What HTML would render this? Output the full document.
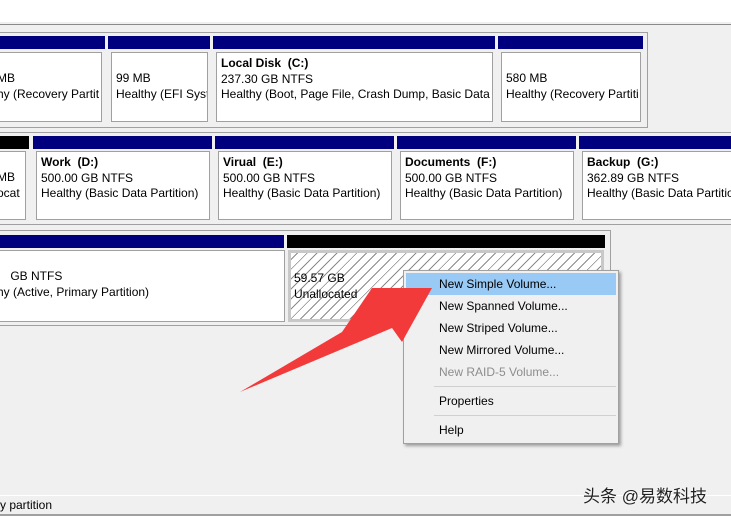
<!DOCTYPE html>
<html><head><meta charset="utf-8"><style>
*{margin:0;padding:0;box-sizing:border-box}
body{width:731px;height:516px;overflow:hidden;background:#f0f0f0;position:relative;font-family:"Liberation Sans",sans-serif;font-size:12px;color:#000}
.a{position:absolute}
.out{position:absolute;border:1px solid #a0a0a0;border-left:none;background:#f0f0f0}
.bar{position:absolute;height:13px;background:#00007f}
.box{position:absolute;background:#fff;border:1px solid #a0a0a0;overflow:hidden;white-space:nowrap;line-height:15.5px;padding:3px 0 0 6px}
.box b{font-weight:bold}
.hat{background:repeating-linear-gradient(135deg,#fff 0 4px,#8a8a8a 4px 5px,#fff 5px 7px)}
.mi{position:absolute;left:35px;font-size:12px}
</style></head><body>
<div class="a" style="left:0;top:0;width:731px;height:22px;background:#fff"></div>
<div class="a" style="left:0;top:24px;width:731px;height:1px;background:#8a8a8a"></div>

<div class="out" style="left:0;top:32px;width:648px;height:96px"></div>
<div class="bar" style="left:0;top:36px;width:105px"></div>
<div class="bar" style="left:108px;top:36px;width:102px"></div>
<div class="bar" style="left:213px;top:36px;width:282px"></div>
<div class="bar" style="left:498px;top:36px;width:145px"></div>
<div class="box" style="left:-10px;top:52px;width:112px;height:70px;padding-top:18px">MB<br>hy (Recovery Partit</div>
<div class="box" style="left:111px;top:52px;width:97px;height:70px;padding-top:18px;padding-left:4px">99 MB<br>Healthy (EFI Syste</div>
<div class="box" style="left:216px;top:52px;width:277px;height:70px;padding-left:4px"><b>Local Disk&nbsp; (C:)</b><br>237.30 GB NTFS<br>Healthy (Boot, Page File, Crash Dump, Basic Data P</div>
<div class="box" style="left:501px;top:52px;width:140px;height:70px;padding-top:18px;padding-left:4px">580 MB<br>Healthy (Recovery Partiti</div>

<div class="out" style="left:0;top:132px;width:732px;height:93px"></div>
<div class="bar" style="left:0;top:136px;width:29px;background:#000"></div>
<div class="bar" style="left:33px;top:136px;width:179px"></div>
<div class="bar" style="left:215px;top:136px;width:179px"></div>
<div class="bar" style="left:397px;top:136px;width:179px"></div>
<div class="bar" style="left:579px;top:136px;width:152px"></div>
<div class="box" style="left:-10px;top:151px;width:36px;height:69px;padding-top:18px">MB<br>ocat</div>
<div class="box" style="left:36px;top:151px;width:174px;height:69px;padding-left:4px"><b>Work&nbsp; (D:)</b><br>500.00 GB NTFS<br>Healthy (Basic Data Partition)</div>
<div class="box" style="left:218px;top:151px;width:174px;height:69px;padding-left:4px"><b>Virual&nbsp; (E:)</b><br>500.00 GB NTFS<br>Healthy (Basic Data Partition)</div>
<div class="box" style="left:400px;top:151px;width:174px;height:69px;padding-left:4px"><b>Documents&nbsp; (F:)</b><br>500.00 GB NTFS<br>Healthy (Basic Data Partition)</div>
<div class="box" style="left:582px;top:151px;width:160px;height:69px;padding-left:4px"><b>Backup&nbsp; (G:)</b><br>362.89 GB NTFS<br>Healthy (Basic Data Partition</div>

<div class="out" style="left:0;top:230px;width:611px;height:96px"></div>
<div class="bar" style="left:0;top:235px;width:284px"></div>
<div class="bar" style="left:287px;top:235px;width:318px;background:#000"></div>
<div class="box" style="left:-10px;top:250px;width:295px;height:72px;padding-top:18px">&nbsp;&nbsp;&nbsp;&nbsp;GB NTFS<br>hy (Active, Primary Partition)</div>
<div class="box hat" style="left:288px;top:250px;width:316px;height:72px;border:3px solid #c8c8c8;padding-top:18px;padding-left:3px">59.57 GB<br>Unallocated</div>

<div class="a" style="left:403px;top:270px;width:216px;height:174px;background:#f0f0f0;border:1px solid #a0a0a0;box-shadow:2px 2px 3px rgba(0,0,0,.35)">
<div class="a" style="left:2px;top:2px;width:210px;height:22px;background:#99c9f5"></div>
<div class="mi" style="top:6px">New Simple Volume...</div>
<div class="mi" style="top:28px">New Spanned Volume...</div>
<div class="mi" style="top:50px">New Striped Volume...</div>
<div class="mi" style="top:72px">New Mirrored Volume...</div>
<div class="mi" style="top:94px;color:#8d8d8d">New RAID-5 Volume...</div>
<div class="a" style="left:30px;top:115px;width:182px;height:1px;background:#d0d0d0"></div>
<div class="mi" style="top:123px">Properties</div>
<div class="a" style="left:30px;top:144px;width:182px;height:1px;background:#d0d0d0"></div>
<div class="mi" style="top:152px">Help</div>
</div>

<svg class="a" style="left:0;top:0" width="731" height="516"><polygon points="240,392 342,332 372,288 432,288 402,342 392,328" fill="#f23a3a"/></svg>

<div class="a" style="left:0;top:495px;width:731px;height:1px;background:#fff"></div>
<div class="a" style="left:0;top:514px;width:731px;height:2px;background:#a0a0a0"></div>
<div class="a" style="left:0;top:498px;font-size:12px">y partition</div>
<div class="a" style="left:583px;top:482px;font-size:17px;color:#222;font-family:'Liberation Sans','Noto Sans CJK SC',sans-serif;text-shadow:0 0 2px #fff">头条 @易数科技</div>
</body></html>
